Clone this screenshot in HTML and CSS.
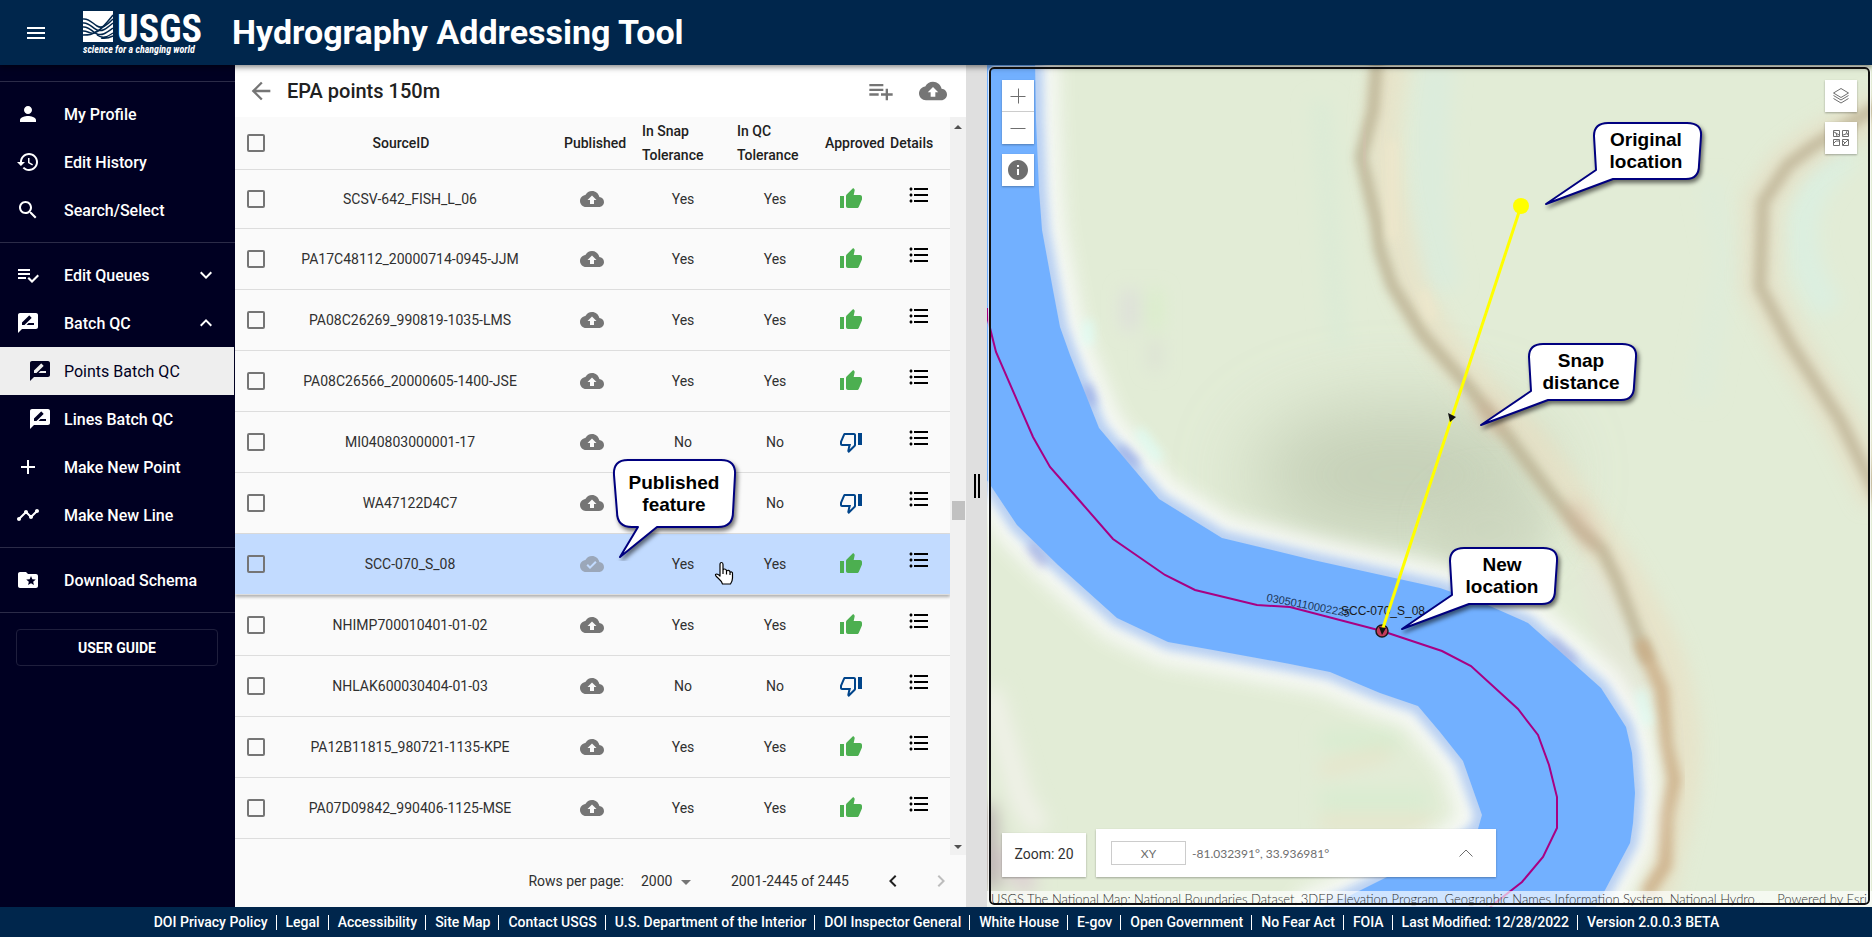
FILE: index.html
```html
<!DOCTYPE html>
<html lang="en">
<head>
<meta charset="utf-8">
<title>Hydrography Addressing Tool</title>
<link rel="stylesheet" href="styles.css">
</head>
<body>
<svg class="defs" aria-hidden="true">
  <symbol id="i-menu" viewBox="0 0 24 24"><path d="M3 18h18v-2H3v2zm0-5h18v-2H3v2zm0-7v2h18V6H3z"/></symbol>
  <symbol id="i-person" viewBox="0 0 24 24"><path d="M12 12c2.21 0 4-1.79 4-4s-1.79-4-4-4-4 1.79-4 4 1.79 4 4 4zm0 2c-2.67 0-8 1.34-8 4v2h16v-2c0-2.66-5.33-4-8-4z"/></symbol>
  <symbol id="i-history" viewBox="0 0 24 24"><path d="M13 3c-4.97 0-9 4.03-9 9H1l3.89 3.89.07.14L9 12H6c0-3.87 3.13-7 7-7s7 3.13 7 7-3.13 7-7 7c-1.93 0-3.68-.79-4.94-2.06l-1.42 1.42C8.27 19.99 10.51 21 13 21c4.97 0 9-4.03 9-9s-4.03-9-9-9zm-1 5v5l4.28 2.54.72-1.21-3.5-2.08V8H12z"/></symbol>
  <symbol id="i-search" viewBox="0 0 24 24"><path d="M15.5 14h-.79l-.28-.27C15.41 12.59 16 11.11 16 9.5 16 5.91 13.09 3 9.5 3S3 5.91 3 9.5 5.91 16 9.5 16c1.61 0 3.09-.59 4.23-1.57l.27.28v.79l5 4.99L20.49 19l-4.99-5zm-6 0C7.01 14 5 11.99 5 9.5S7.01 5 9.5 5 14 7.01 14 9.5 11.99 14 9.5 14z"/></symbol>
  <symbol id="i-queue" viewBox="0 0 24 24"><path d="M14 10H2v2h12v-2zm0-4H2v2h12V6zM2 16h8v-2H2v2zm19.5-4.5L23 13l-6.99 7-4.51-4.5L13 14l3.01 3 5.49-5.5z"/></symbol>
  <symbol id="i-review" viewBox="0 0 24 24"><path d="M20 2H4c-1.1 0-1.99.9-1.99 2L2 22l4-4h14c1.1 0 2-.9 2-2V4c0-1.1-.9-2-2-2zM6 14v-2.47l6.88-6.88c.2-.2.51-.2.71 0l1.77 1.77c.2.2.2.51 0 .71L8.47 14H6zm12 0h-7.5l2-2H18v2z"/></symbol>
  <symbol id="i-add" viewBox="0 0 24 24"><path d="M19 13h-6v6h-2v-6H5v-2h6V5h2v6h6v2z"/></symbol>
  <symbol id="i-line" viewBox="0 0 24 24"><path d="M23 8c0 1.1-.9 2-2 2-.18 0-.35-.02-.51-.07l-3.56 3.55c.05.16.07.34.07.52 0 1.1-.9 2-2 2s-2-.9-2-2c0-.18.02-.36.07-.52l-2.55-2.55c-.16.05-.34.07-.52.07s-.36-.02-.52-.07l-4.55 4.56c.05.16.07.33.07.51 0 1.1-.9 2-2 2s-2-.9-2-2 .9-2 2-2c.18 0 .35.02.51.07l4.56-4.55C8.02 9.36 8 9.18 8 9c0-1.1.9-2 2-2s2 .9 2 2c0 .18-.02.36-.07.52l2.55 2.55c.16-.05.34-.07.52-.07s.36.02.52.07l3.55-3.56C19.02 8.35 19 8.18 19 8c0-1.1.9-2 2-2s2 .9 2 2z"/></symbol>
  <symbol id="i-folder" viewBox="0 0 24 24"><path d="M20 6h-8l-2-2H4c-1.1 0-2 .9-2 2v12c0 1.1.9 2 2 2h16c1.1 0 2-.9 2-2V8c0-1.1-.9-2-2-2zm-2.06 11L15 15.28 12.06 17l.78-3.33-2.59-2.24 3.41-.29L15 8l1.34 3.14 3.41.29-2.59 2.24.78 3.33z"/></symbol>
  <symbol id="i-down" viewBox="0 0 24 24"><path d="M16.59 8.59L12 13.17 7.41 8.59 6 10l6 6 6-6z"/></symbol>
  <symbol id="i-up" viewBox="0 0 24 24"><path d="M12 8l-6 6 1.41 1.41L12 10.83l4.59 4.58L18 14z"/></symbol>
  <symbol id="i-left" viewBox="0 0 24 24"><path d="M15.41 7.41L14 6l-6 6 6 6 1.41-1.41L10.83 12z"/></symbol>
  <symbol id="i-right" viewBox="0 0 24 24"><path d="M10 6L8.59 7.41 13.17 12l-4.58 4.59L10 18l6-6z"/></symbol>
  <symbol id="i-back" viewBox="0 0 24 24"><path d="M20 11H7.83l5.59-5.59L12 4l-8 8 8 8 1.41-1.41L7.83 13H20v-2z"/></symbol>
  <symbol id="i-listadd" viewBox="0 0 24 24"><path d="M14 10H2v2h12v-2zm0-4H2v2h12V6zm4 8v-4h-2v4h-4v2h4v4h2v-4h4v-2h-4zM2 16h8v-2H2v2z"/></symbol>
  <symbol id="i-cloud" viewBox="0 0 24 24"><path d="M19.35 10.04C18.67 6.59 15.64 4 12 4 9.11 4 6.6 5.64 5.35 8.04 2.34 8.36 0 10.91 0 14c0 3.31 2.69 6 6 6h13c2.76 0 5-2.24 5-5 0-2.64-2.05-4.78-4.65-4.96zM14 13v4h-4v-4H7.5L12 8.5l4.500 4.500H14z"/></symbol>
  <symbol id="i-done" viewBox="0 0 24 24"><path d="M19.35 10.04C18.67 6.59 15.64 4 12 4 9.11 4 6.6 5.64 5.35 8.04 2.34 8.36 0 10.91 0 14c0 3.31 2.69 6 6 6h13c2.76 0 5-2.24 5-5 0-2.64-2.05-4.78-4.65-4.96zM10 17l-3.5-3.500 1.410-1.410L10 14.170 15.180 9l1.410 1.410L10 17z"/></symbol>
  <symbol id="i-yes" viewBox="0 0 24 24"><path d="M1 21h4V9H1v12zm22-11c0-1.1-.9-2-2-2h-6.31l.95-4.57.03-.32c0-.41-.17-.79-.44-1.06L14.17 1 7.59 7.59C7.22 7.95 7 8.45 7 9v10c0 1.1.9 2 2 2h9c.83 0 1.54-.5 1.84-1.22l3.02-7.05c.09-.23.14-.47.14-.73v-2z"/></symbol>
  <symbol id="i-no" viewBox="0 0 24 24"><path d="M15 3H6c-.83 0-1.54.5-1.84 1.22l-3.02 7.05c-.09.23-.14.47-.14.73v2c0 1.1.9 2 2 2h6.31l-.95 4.57-.03.32c0 .41.17.79.44 1.06L9.83 23l6.59-6.59c.36-.36.58-.86.58-1.41V5c0-1.1-.9-2-2-2zm0 12l-4.34 4.34L12 14H3v-2l3-7h9v10zm4-12h4v12h-4z"/></symbol>
  <symbol id="i-list" viewBox="0 0 24 24"><path d="M4 10.5c-.83 0-1.5.67-1.5 1.5s.67 1.5 1.5 1.5 1.5-.67 1.5-1.5-.67-1.5-1.5-1.5zm0-6c-.83 0-1.5.67-1.5 1.5S3.17 7.5 4 7.5 5.5 6.83 5.5 6 4.83 4.5 4 4.5zm0 12c-.83 0-1.5.68-1.5 1.5s.68 1.5 1.5 1.5 1.5-.68 1.5-1.5-.67-1.5-1.5-1.5zM7 19h14v-2H7v2zm0-6h14v-2H7v2zm0-8v2h14V5H7z"/></symbol>
  <symbol id="i-info" viewBox="0 0 24 24"><path d="M12 2C6.48 2 2 6.480 2 12s4.480 10 10 10 10-4.480 10-10S17.520 2 12 2zm1 15h-2v-6h2v6zm0-8h-2V7h2v2z"/></symbol>
  <symbol id="i-layers" viewBox="0 0 18 18"><path d="M9 1.500l7.500 4.500L9 10.500 1.500 6zM1.500 8.500L9 13l7.500-4.500M1.500 11.500L9 16l7.500-4.500" fill="none" stroke="#6e6e6e"/></symbol>
  <symbol id="i-basemap" viewBox="0 0 18 18"><path d="M1.500 1.500h6v6h-6zM10.500 1.500h6v6h-6zM1.500 10.500h6v6h-6zM10.500 10.500h6v6h-6zM2 3l2 1 1 3M4 4l3 2M11 6l3-1 1-3M15 6l1-2M2 14l2-2h3M11 12l2 2-2 2M13 14l3-3" fill="none" stroke="#6e6e6e"/></symbol>
</svg>

<header class="header">
  <button class="menu-button" aria-label="Menu"><svg class="icon"><use href="#i-menu"/></svg></button>
  <a class="logo" href="#" aria-label="USGS home">
    <svg viewBox="0 0 118 46" width="118" height="46">
      <path d="M0 1h30v31H0z" fill="#fff"/>
      <g fill="none" stroke="#00264c" stroke-width="1.500">
        <path d="M0 9c6-1 9 4 14 7s9 0 16-7"/>
        <path d="M0 13c6-1 9 5 14 7s9-1 16-7"/>
        <path d="M0 17c6-1 9 5 14 7s9-1 16-6"/>
        <path d="M0 21c5 0 7 3 11 2s8-4 19-18"/>
        <path d="M0 25c6 0 9 0 14-4"/>
        <path d="M14 25c6 4 10 2 16-2M18 28c5 1 8 0 12-2"/>
      </g>
      <text class="logo-name" x="34" y="32">USGS</text>
      <text class="logo-tag" x="0" y="43">science for a changing world</text>
    </svg>
  </a>
  <h1 class="title">Hydrography Addressing Tool</h1>
</header>

<div class="body">
  <nav class="sidebar">
    <ul class="nav-group">
      <li><a class="nav-item" href="#"><svg class="icon"><use href="#i-person"/></svg>My Profile</a></li>
      <li><a class="nav-item" href="#"><svg class="icon"><use href="#i-history"/></svg>Edit History</a></li>
      <li><a class="nav-item" href="#"><svg class="icon"><use href="#i-search"/></svg>Search/Select</a></li>
    </ul>
    <ul class="nav-group">
      <li><button class="nav-item"><svg class="icon"><use href="#i-queue"/></svg>Edit Queues<svg class="icon chevron"><use href="#i-down"/></svg></button></li>
      <li><button class="nav-item"><svg class="icon"><use href="#i-review"/></svg>Batch QC<svg class="icon chevron"><use href="#i-up"/></svg></button></li>
      <li><a class="nav-item nested active" href="#"><svg class="icon"><use href="#i-review"/></svg>Points Batch QC</a></li>
      <li><a class="nav-item nested" href="#"><svg class="icon"><use href="#i-review"/></svg>Lines Batch QC</a></li>
      <li><a class="nav-item" href="#"><svg class="icon"><use href="#i-add"/></svg>Make New Point</a></li>
      <li><a class="nav-item" href="#"><svg class="icon"><use href="#i-line"/></svg>Make New Line</a></li>
    </ul>
    <ul class="nav-group">
      <li><a class="nav-item" href="#"><svg class="icon"><use href="#i-folder"/></svg>Download Schema</a></li>
    </ul>
    <div class="guide"><button class="guide-button">USER GUIDE</button></div>
  </nav>

  <main class="panel">
    <div class="toolbar">
      <button class="icon-button" aria-label="Back"><svg class="icon large"><use href="#i-back"/></svg></button>
      <h2 class="toolbar-title">EPA points 150m</h2>
      <button class="icon-button" aria-label="Add to queue"><svg class="icon large"><use href="#i-listadd"/></svg></button>
      <button class="icon-button" aria-label="Publish all"><svg class="icon large"><use href="#i-cloud"/></svg></button>
    </div>
    <div class="table-area">
      <div class="table-scroll">
      <table class="points">
        <colgroup><col class="c-check"><col><col class="c-pub"><col class="c-snap"><col class="c-qc"><col class="c-app"><col class="c-det"></colgroup>
        <thead><tr>
          <th class="check"><input type="checkbox" aria-label="Select all"></th>
          <th class="h-source">SourceID</th><th class="h-pub">Published</th><th class="h-snap">In Snap<br>Tolerance</th><th class="h-qc">In QC<br>Tolerance</th><th class="h-app">Approved</th><th class="h-det">Details</th>
        </tr></thead>
        <tbody>
          <tr><td class="check"><input type="checkbox" aria-label="Select SCSV-642_FISH_L_06"></td><td>SCSV-642_FISH_L_06</td><td><svg class="icon cloud"><use href="#i-cloud"/></svg></td><td>Yes</td><td>Yes</td><td><svg class="icon yes"><use href="#i-yes"/></svg></td><td class="details"><button class="icon-button" aria-label="Details"><svg class="icon"><use href="#i-list"/></svg></button></td></tr>
          <tr><td class="check"><input type="checkbox" aria-label="Select PA17C48112_20000714-0945-JJM"></td><td>PA17C48112_20000714-0945-JJM</td><td><svg class="icon cloud"><use href="#i-cloud"/></svg></td><td>Yes</td><td>Yes</td><td><svg class="icon yes"><use href="#i-yes"/></svg></td><td class="details"><button class="icon-button" aria-label="Details"><svg class="icon"><use href="#i-list"/></svg></button></td></tr>
          <tr><td class="check"><input type="checkbox" aria-label="Select PA08C26269_990819-1035-LMS"></td><td>PA08C26269_990819-1035-LMS</td><td><svg class="icon cloud"><use href="#i-cloud"/></svg></td><td>Yes</td><td>Yes</td><td><svg class="icon yes"><use href="#i-yes"/></svg></td><td class="details"><button class="icon-button" aria-label="Details"><svg class="icon"><use href="#i-list"/></svg></button></td></tr>
          <tr><td class="check"><input type="checkbox" aria-label="Select PA08C26566_20000605-1400-JSE"></td><td>PA08C26566_20000605-1400-JSE</td><td><svg class="icon cloud"><use href="#i-cloud"/></svg></td><td>Yes</td><td>Yes</td><td><svg class="icon yes"><use href="#i-yes"/></svg></td><td class="details"><button class="icon-button" aria-label="Details"><svg class="icon"><use href="#i-list"/></svg></button></td></tr>
          <tr><td class="check"><input type="checkbox" aria-label="Select MI040803000001-17"></td><td>MI040803000001-17</td><td><svg class="icon cloud"><use href="#i-cloud"/></svg></td><td>No</td><td>No</td><td><svg class="icon no"><use href="#i-no"/></svg></td><td class="details"><button class="icon-button" aria-label="Details"><svg class="icon"><use href="#i-list"/></svg></button></td></tr>
          <tr><td class="check"><input type="checkbox" aria-label="Select WA47122D4C7"></td><td>WA47122D4C7</td><td><svg class="icon cloud"><use href="#i-cloud"/></svg></td><td></td><td>No</td><td><svg class="icon no"><use href="#i-no"/></svg></td><td class="details"><button class="icon-button" aria-label="Details"><svg class="icon"><use href="#i-list"/></svg></button></td></tr>
          <tr class="selected"><td class="check"><input type="checkbox" aria-label="Select SCC-070_S_08"></td><td>SCC-070_S_08</td><td class="published"><svg class="icon cloud done"><use href="#i-done"/></svg>
            <svg class="callout-published" viewBox="0 0 134 106" width="134" height="106">
              <path class="bubble" d="M19 5H112Q127 5 126 20L124 57Q124 72 109 72H48L11 102L29 72H23Q8 72 8 57L5 20Q4 5 19 5Z"/>
              <text class="callout-text" x="65" y="34">Published</text><text class="callout-text" x="65" y="56">feature</text>
            </svg></td><td class="hovered">Yes
            <svg class="cursor" viewBox="0 0 20 25" width="20" height="25" aria-hidden="true"><path d="M6 15V3.500Q6 1.500 7.500 1.500T9 3.500V9.500Q9 8 10.500 8T12.500 9.500V10.500Q13 9 14.500 9.300T16 11V12Q16.500 10.500 17.700 11T18.500 13V17Q18.500 20 16.500 23H8.500Q7.500 20 4.500 17.500Q1 14.500 1.500 13.500Q3 12 6 15ZM9 9V13M12.500 10V13.500M16 11.500V14" fill="#fff" stroke="#000" stroke-width="1.200" stroke-linejoin="round"/></svg></td><td>Yes</td><td><svg class="icon yes"><use href="#i-yes"/></svg></td><td class="details"><button class="icon-button" aria-label="Details"><svg class="icon"><use href="#i-list"/></svg></button></td></tr>
          <tr><td class="check"><input type="checkbox" aria-label="Select NHIMP700010401-01-02"></td><td>NHIMP700010401-01-02</td><td><svg class="icon cloud"><use href="#i-cloud"/></svg></td><td>Yes</td><td>Yes</td><td><svg class="icon yes"><use href="#i-yes"/></svg></td><td class="details"><button class="icon-button" aria-label="Details"><svg class="icon"><use href="#i-list"/></svg></button></td></tr>
          <tr><td class="check"><input type="checkbox" aria-label="Select NHLAK600030404-01-03"></td><td>NHLAK600030404-01-03</td><td><svg class="icon cloud"><use href="#i-cloud"/></svg></td><td>No</td><td>No</td><td><svg class="icon no"><use href="#i-no"/></svg></td><td class="details"><button class="icon-button" aria-label="Details"><svg class="icon"><use href="#i-list"/></svg></button></td></tr>
          <tr><td class="check"><input type="checkbox" aria-label="Select PA12B11815_980721-1135-KPE"></td><td>PA12B11815_980721-1135-KPE</td><td><svg class="icon cloud"><use href="#i-cloud"/></svg></td><td>Yes</td><td>Yes</td><td><svg class="icon yes"><use href="#i-yes"/></svg></td><td class="details"><button class="icon-button" aria-label="Details"><svg class="icon"><use href="#i-list"/></svg></button></td></tr>
          <tr><td class="check"><input type="checkbox" aria-label="Select PA07D09842_990406-1125-MSE"></td><td>PA07D09842_990406-1125-MSE</td><td><svg class="icon cloud"><use href="#i-cloud"/></svg></td><td>Yes</td><td>Yes</td><td><svg class="icon yes"><use href="#i-yes"/></svg></td><td class="details"><button class="icon-button" aria-label="Details"><svg class="icon"><use href="#i-list"/></svg></button></td></tr>
        </tbody>
      </table>
      </div>
      <div class="scrollbar" aria-hidden="true"><span class="arrow-up"></span><span class="track-top"></span><span class="thumb"></span><span class="track-bottom"></span><span class="arrow-down"></span></div>
    </div>
    <div class="pager">
      <label for="rows">Rows per page:</label>
      <span class="select-wrap"><select id="rows"><option>2000</option></select></span>
      <span class="range">2001-2445 of 2445</span>
      <button class="icon-button dark" aria-label="Previous page"><svg class="icon"><use href="#i-left"/></svg></button>
      <button class="icon-button disabled" aria-label="Next page" disabled><svg class="icon"><use href="#i-right"/></svg></button>
    </div>
  </main>

  <div class="splitter"><span class="grip"></span></div>

  <section class="map" aria-label="Map">
    <svg class="map-canvas" viewBox="987 65 885 842" preserveAspectRatio="xMidYMid slice">
      <defs>
        <filter id="b4" x="-30%" y="-30%" width="160%" height="160%"><feGaussianBlur stdDeviation="5"/></filter>
        <filter id="b8" x="-30%" y="-30%" width="160%" height="160%"><feGaussianBlur stdDeviation="9"/></filter>
        <filter id="b14" x="-50%" y="-50%" width="200%" height="200%"><feGaussianBlur stdDeviation="16"/></filter>
        <filter id="b30" x="-100%" y="-100%" width="300%" height="300%"><feGaussianBlur stdDeviation="40"/></filter>
        <path id="river" d="M980 60H1035L1036 120 1039 190 1042 230 1053 290 1060 327 1070 355 1099 428 1159 499 1222 538 1313 560 1440 588 1483 603 1528 623 1601 688 1626 727 1632 753 1635 793 1633 823 1630 843 1604 892 1594 910H1315L1345 898 1387 877 1450 850 1478 829 1482 815 1463 761 1440 732 1418 706 1380 693 1330 672 1290 664 1213 650 1168 642 1117 618 1058 565 1017 525 991 486 980 470Z"/>
        <path id="bubble" class="bubble" d="M1608 123H1687Q1702 123 1701 136L1699 165Q1699 179 1686 179H1613L1546 204L1596 170L1594 136Q1594 123 1608 123Z"/>
      </defs>
      <rect x="987" y="65" width="885" height="842" fill="#e2ecd6"/>
      <ellipse cx="1400" cy="475" rx="150" ry="70" fill="#b9c4aa" opacity=".7" filter="url(#b30)"/>
      <ellipse cx="1490" cy="530" rx="60" ry="50" fill="#c9d3bb" opacity=".6" filter="url(#b14)"/>
      <g filter="url(#b8)">
        <path d="M1437 65C1425 180 1430 250 1445 290" fill="none" stroke="#dcecdc" stroke-width="34"/>
        <path d="M1320 100C1330 200 1330 260 1340 350" fill="none" stroke="#dcebd6" stroke-width="20"/>
        <path d="M990 690L1022 800 1040 830" stroke="#f0f1e8" fill="none" stroke-width="22"/>
        <path d="M1850 150C1780 200 1800 270 1830 310" fill="none" stroke="#dcefe0" stroke-width="30"/>
        <path d="M1710 180L1725 260 1700 400" fill="none" stroke="#dfecd9" stroke-width="24"/>
        <path d="M1155 290V330" stroke="#d8eec8" stroke-width="12"/>
        <path d="M1130 290V330" stroke="#dddeda" stroke-width="16"/>
        <path d="M1155 340V370" stroke="#dbe0d4" stroke-width="12"/>
        <path d="M1320 740H1400M1320 800H1430" stroke="#d8ecd0" stroke-width="18"/>
        <path d="M1320 770L1390 752M1320 822H1430" stroke="#e8e2c6" stroke-width="10"/>
        <path d="M1600 560L1640 720" stroke="#e3e7d6" stroke-width="50"/>
        <path d="M985 805L990 890" stroke="#b8aeae" stroke-width="20"/>
        <path d="M1005 850L1030 890" stroke="#dccfd2" stroke-width="22"/>
      </g>
      <g fill="none" stroke-linejoin="round">
        <path d="M1392 60C1370 150 1392 220 1400 250C1412 320 1460 370 1530 440C1580 510 1640 590 1668 660C1690 730 1685 780 1672 830L1655 900" stroke="#e9e0c4" stroke-width="34" opacity=".7" filter="url(#b8)"/>
        <path d="M1377 60L1373 110 1361 157 1376 220 1380 250 1392 285 1423 335 1467 385 1508 437 1550 493 1580 530 1602 550 1617 580 1633 622 1648 662" stroke="#b8ad8e" stroke-width="13" opacity=".75" filter="url(#b4)"/>
        <path d="M1640 640L1662 690 1666 745 1674 780 1666 815 1665 865 1645 895" stroke="#cbac84" stroke-width="15" opacity=".8" filter="url(#b4)"/>
        <path d="M1365 130L1364 170" stroke="#d8bfb0" stroke-width="14" opacity=".6" filter="url(#b8)"/>
        <path d="M1392 140V240M1423 290L1432 320" stroke="#f0e8cc" stroke-width="10" opacity=".8" filter="url(#b4)"/>
        <path d="M1880 108L1812 147 1788 165 1762 202 1760 287 1790 343 1840 420 1880 500" stroke="#e6dec4" stroke-width="38" opacity=".7" filter="url(#b8)"/>
        <path d="M1880 105L1812 147 1788 165 1763 202 1760 287 1790 343 1840 420 1880 500" stroke="#b9ae90" stroke-width="13" opacity=".7" filter="url(#b4)"/>
        <path d="M1480 405L1500 430M1570 505L1595 550" stroke="#d0a890" stroke-width="16" opacity=".5" filter="url(#b8)"/>
      </g>
      <use href="#river" fill="#fff" stroke="#fbfcfb" stroke-width="46" stroke-linejoin="round" opacity=".85" filter="url(#b8)"/>
      <use href="#river" fill="#a8c8f4" stroke="#a9c6f2" stroke-width="16" stroke-linejoin="round" opacity=".8" filter="url(#b4)"/>
      <g filter="url(#b4)" opacity=".6">
        <path d="M1087 385L1093 405M1120 447L1138 465" stroke="#8a9be0" stroke-width="10"/>
        <path d="M1088 320V345M1138 430L1160 460M1640 690L1648 725" stroke="#dcfff8" stroke-width="12"/>
        <path d="M1030 545L1045 565M1550 640L1575 662" stroke="#9aa2dc" stroke-width="10"/>
      </g>
      <use href="#river" fill="#72b0ff"/>
      <path d="M987 308L988 320 993 340 996 352 1033 437 1050 467 1079 500 1113 539 1165 575 1195 590 1257 605 1290 607 1382 631 1442 651 1471 666 1518 709 1538 735 1549 765 1557 797 1557 828 1543 857 1522 882 1490 907" fill="none" stroke="#a80084" stroke-width="2"/>
      <text class="reach-label" transform="translate(1266 601) rotate(11)">03050110002225</text>
      <text class="point-label" x="1383" y="615">SCC-070_S_08</text>
      <circle cx="1382" cy="631" r="6" fill="#c43c5c" stroke="#1a1a1a" stroke-width="1.500"/>
      <path d="M1521 206L1382 631" stroke="#ff0" stroke-width="3"/>
      <circle cx="1521" cy="206" r="8" fill="#ff0"/>
      <path d="M1448 413L1456 417 1450 422ZM1379 627L1386 628 1382 635Z" fill="#111"/>
      <use href="#bubble"/>
      <text class="callout-text" x="1646" y="146">Original</text><text class="callout-text" x="1646" y="168">location</text>
      <use href="#bubble" transform="translate(-65 221)"/>
      <text class="callout-text" x="1581" y="367">Snap</text><text class="callout-text" x="1581" y="389">distance</text>
      <use href="#bubble" transform="translate(-144 425)"/>
      <text class="callout-text" x="1502" y="571">New</text><text class="callout-text" x="1502" y="593">location</text>
    </svg>
    <div class="map-tools left">
      <div class="zoom-group">
        <button class="map-button" aria-label="Zoom in"><svg class="thin" viewBox="0 0 16 16"><path d="M.5 8.500h15M8.500 .5v15"/></svg></button>
        <button class="map-button" aria-label="Zoom out"><svg class="thin" viewBox="0 0 16 16"><path d="M.5 8.500h15"/></svg></button>
      </div>
      <button class="map-button shadowed" aria-label="Information"><svg class="icon"><use href="#i-info"/></svg></button>
    </div>
    <div class="map-tools right">
      <button class="map-button shadowed" aria-label="Layers"><svg class="widget-icon"><use href="#i-layers"/></svg></button>
      <button class="map-button shadowed" aria-label="Basemaps"><svg class="widget-icon"><use href="#i-basemap"/></svg></button>
    </div>
    <div class="map-status">
      <div class="zoom-level">Zoom: 20</div>
      <div class="coordinates">
        <button class="format">XY</button><span class="coord-value">-81.032391°, 33.936981°</span>
        <button class="expand" aria-label="Expand"><svg class="thin" viewBox="0 0 16 16"><path d="M1.500 11.500L8 5l6.500 6.500"/></svg></button>
      </div>
    </div>
    <div class="attribution"><span>USGS The National Map: National Boundaries Dataset, 3DEP Elevation Program, Geographic Names Information System, National Hydro…</span><span>Powered by <a href="#">Esri</a></span></div>
    <div class="map-frame"></div>
  </section>
</div>

<footer class="footer">
  <a href="#">DOI Privacy Policy</a><a href="#">Legal</a><a href="#">Accessibility</a><a href="#">Site Map</a><a href="#">Contact USGS</a><a href="#">U.S. Department of the Interior</a><a href="#">DOI Inspector General</a><a href="#">White House</a><a href="#">E-gov</a><a href="#">Open Government</a><a href="#">No Fear Act</a><a href="#">FOIA</a><span>Last Modified: 12/28/2022</span><span>Version 2.0.0.3 BETA</span>
</footer>
</body>
</html>
```
FILE: styles.css
```css
* { box-sizing: border-box; }
body {
  margin: 0;
  height: 100vh;
  display: flex;
  flex-direction: column;
  overflow: hidden;
  font-family: Roboto, "Liberation Sans", sans-serif;
  font-size: 14px;
  color: #212121;
}
button, select, input { font: inherit; color: inherit; margin: 0; }
button { border: 0; padding: 0; background: none; cursor: pointer; }
a { color: inherit; text-decoration: none; }
.defs { position: absolute; width: 0; height: 0; }
.icon { width: 24px; height: 24px; fill: currentColor; display: block; flex: none; }
.icon.large { width: 28px; height: 28px; }

/* Header */
.header {
  position: relative;
  z-index: 2;
  height: 65px;
  flex: none;
  display: flex;
  align-items: center;
  padding-left: 24px;
  background: #00264c;
  color: #fff;
  box-shadow: 0 2px 6px rgba(0, 0, 0, .5);
}
.logo { margin: 0 31px 0 35px; display: flex; }
.logo svg { overflow: visible; }
.logo-name { font: bold 38px "Liberation Sans Narrow", "Roboto Condensed", Roboto, sans-serif; fill: #fff; }
.logo-tag { font: italic bold 10px "Liberation Sans Narrow", "Roboto Condensed", Roboto, sans-serif; fill: #fff; }
.title { margin: 0; font-size: 34px; font-weight: 700; line-height: 38px; padding-bottom: 2px; }

/* Main area */
.body { flex: 1; min-height: 0; display: flex; }

.sidebar { width: 235px; flex: none; padding-top: 16px; background: #000022; color: #fff; }
.nav-group { list-style: none; margin: 0; padding: 8px 0; border-top: 1px solid #2b2b48; }
.nav-item {
  display: flex;
  align-items: center;
  gap: 24px;
  width: 234px;
  height: 48px;
  padding: 0 16px;
  font-size: 16px;
  font-weight: 500;
  text-align: left;
}
.nested { padding-left: 28px; gap: 12px; }
.active { background: #eee; color: #000022; font-weight: 400; }
.chevron { margin-left: auto; }
.guide { padding: 16px; border-top: 1px solid #2b2b48; }
.guide-button { width: 202px; height: 37px; border: 1px solid #1f1f3d; border-radius: 4px; font-weight: 700; }

/* Table panel */
.panel { width: 731px; flex: none; display: flex; flex-direction: column; background: #fafafa; }
.toolbar { height: 52px; flex: none; display: flex; align-items: center; gap: 24px; padding: 0 19px 0 12px; background: #fff; color: #757575; }
.toolbar-title { flex: 1; margin: 0 0 0 -12px; padding-left: 12px; font-size: 20px; font-weight: 500; color: #212121; }
.toolbar .icon-button:first-child { margin-right: -12px; }
.icon-button { display: inline-flex; }
.table-area { flex: 1; min-height: 0; display: flex; }
.table-scroll { flex: 1; min-width: 0; }
.points { width: 100%; border-collapse: separate; border-spacing: 0; table-layout: fixed; }
.c-check { width: 40px; }
.c-pub { width: 94px; }
.c-snap { width: 88px; }
.c-qc { width: 96px; }
.c-app { width: 56px; }
.c-det { width: 71px; }
.points th { height: 53px; padding: 0; border-bottom: 1px solid #ddd; font-weight: 500; line-height: 24px; text-align: left; white-space: nowrap; }
.points td { height: 61px; padding: 0; border-bottom: 1px solid #ddd; text-align: center; color: #303030; }
.points tbody tr:first-child td { height: 59px; }
.points .check { padding-left: 12px; text-align: left; }
.points .h-source { padding-right: 18px; text-align: center; }
.points .h-pub { padding-left: 19px; }
.points .h-snap { padding-left: 3px; }
.points .h-qc { padding-left: 10px; }
.points .h-app { padding-left: 2px; }
.points .h-det { padding-left: 11px; }
.points td .icon { margin: 0 auto; }
.points .details { padding: 0 0 6px 9px; color: #000; }
.points input { appearance: none; display: block; width: 18px; height: 18px; border: 2px solid #757575; border-radius: 2px; }
.cloud { color: #757575; }
.done { opacity: .5; }
.yes { color: #4caf50; }
.no { color: #00448a; }
.points .selected td { background: #c2dbff; }
.selected { box-shadow: 0 2px 3px rgba(0, 0, 0, .3); }
.published, .hovered { position: relative; }
.callout-published { position: absolute; z-index: 1; left: 64px; top: -79px; }
.cursor { position: absolute; left: 75px; top: 27px; }
.bubble { fill: #fff; stroke: #00007f; stroke-width: 2px; stroke-linejoin: round; filter: drop-shadow(2px 3px 2px rgba(0, 0, 0, .55)); }
.callout-text { font: bold 19px "Liberation Sans", sans-serif; text-anchor: middle; fill: #000; }

.scrollbar { width: 16px; flex: none; display: flex; flex-direction: column; align-items: center; background: #f1f1f1; padding: 8px 0 6px; }
.arrow-up, .arrow-down { border: 4px solid transparent; }
.arrow-up { border-top: 0; border-bottom-color: #505050; }
.arrow-down { border-bottom: 0; border-top-color: #505050; }
.track-top { flex: 372; }
.thumb { width: 13px; height: 19px; background: #c1c1c1; }
.track-bottom { flex: 325; }

.pager { height: 52px; flex: none; display: flex; align-items: center; justify-content: flex-end; padding-right: 13px; color: #303030; }
.select-wrap { position: relative; margin: 0 40px 0 17px; display: flex; }
.select-wrap::after { content: ""; position: absolute; right: 0; top: 7px; border: 5px solid transparent; border-top-color: #757575; border-bottom: 0; pointer-events: none; }
.pager select { appearance: none; border: 0; padding: 0; width: 50px; background: none; }
.range { margin-right: 32px; }
.dark { color: #212121; margin-right: 24px; }
.disabled { color: #bdbdbd; }

.splitter { width: 21px; flex: none; display: flex; align-items: center; padding-left: 8px; background: #dfdfdf; }
.grip { width: 6px; height: 24px; border: solid #000; border-width: 0 2px; }

/* Map */
.map { position: relative; flex: 1; min-width: 0; overflow: hidden; display: flex; flex-direction: column; justify-content: flex-end; }
.map-canvas { position: absolute; inset: 0; width: 100%; height: 100%; }
.map-frame { position: absolute; inset: 2px; border: 2px solid #111; border-radius: 5px; outline: 1px solid rgba(255, 255, 255, .7); pointer-events: none; }
.reach-label { font: 11px "Liberation Sans", sans-serif; fill: #1c3557; }
.point-label { font: 12px "Liberation Sans", sans-serif; text-anchor: middle; fill: #1a1a1a; }
.map-tools { position: absolute; top: 15px; display: flex; flex-direction: column; gap: 10px; }
.left { left: 15px; }
.right { right: 15px; }
.map-button { width: 32px; height: 32px; display: flex; align-items: center; justify-content: center; background: #fff; color: #6e6e6e; }
.shadowed, .zoom-group, .zoom-level, .coordinates { box-shadow: 0 1px 2px rgba(0, 0, 0, .3); }
.zoom-group .map-button:first-child { border-bottom: 1px solid #ccc; }
.widget-icon { width: 18px; height: 18px; }
.thin { width: 16px; height: 16px; fill: none; stroke: #6e6e6e; }
.map-status { position: relative; display: flex; align-items: flex-end; gap: 10px; padding: 0 15px 14px; }
.zoom-level { width: 84px; height: 44px; line-height: 42px; text-align: center; background: #fff; color: #323232; }
.coordinates { width: 400px; height: 48px; display: flex; align-items: center; padding: 0 22px 0 15px; background: #fff; color: #6e6e6e; font-family: Lato, sans-serif; }
.format { width: 75px; height: 24px; margin-right: 6px; border: 1px solid #ccc; font-size: 12px; }
.coord-value { flex: 1; font-size: 12px; }
.expand { display: flex; }
.attribution { position: relative; height: 16px; flex: none; display: flex; justify-content: space-between; padding: 0 5px 0 4px; background: rgba(255, 255, 255, .66); font: 300 13px/16px Lato, sans-serif; color: #323232; white-space: nowrap; }

/* Footer */
.footer { position: relative; height: 30px; flex: none; display: flex; align-items: center; justify-content: center; background: #00264c; color: #fff; font-weight: 500; line-height: 15px; }
.footer > * { padding: 0 8px 0 9px; }
.footer > * + * { border-left: 1px solid #fff; }
```
